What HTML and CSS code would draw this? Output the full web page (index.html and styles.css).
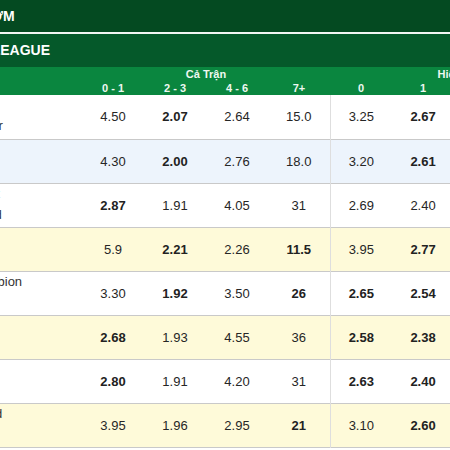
FILE: index.html
```html
<!DOCTYPE html>
<html lang="vi">
<head>
	<meta charset="UTF-8">
	<meta name="viewport" content="width=device-width, initial-scale=1.0">
	<title>Tỷ lệ kèo sớm</title>
	<link rel="stylesheet" href="styles.css">
</head>
<body>
	<div class="bang-keo">
		<div class="tieu-de">TỶ LỆ KÈO SỚM</div>
		<div class="giai-dau">PREMIER LEAGUE</div>
		<table class="bang">
			<colgroup>
				<col class="cot-doi">
				<col span="10" class="cot-keo">
			</colgroup>
			<thead>
				<tr class="nhom">
					<th rowspan="2"></th>
					<th colspan="4">Cả Trận</th>
					<th colspan="4">Hiệp 1</th>
					<th colspan="2"></th>
				</tr>
				<tr class="muc">
					<th>0 - 1</th>
					<th>2 - 3</th>
					<th>4 - 6</th>
					<th>7+</th>
					<th>0</th>
					<th>1</th>
					<th>2</th>
					<th>3+</th>
					<th></th>
					<th></th>
				</tr>
			</thead>
			<tbody>
				<tr>
					<td class="doi"><div>Chelsea</div><div>Tottenham Hotspur</div></td>
					<td>4.50</td><td class="dam">2.07</td><td>2.64</td><td>15.0</td>
					<td class="chia">3.25</td><td class="dam">2.67</td><td>5.10</td><td>11.0</td><td></td><td></td>
				</tr>
				<tr class="xanh">
					<td class="doi"><div>Everton</div><div>Fulham</div></td>
					<td>4.30</td><td class="dam">2.00</td><td>2.76</td><td>18.0</td>
					<td class="chia">3.20</td><td class="dam">2.61</td><td>5.30</td><td>12.0</td><td></td><td></td>
				</tr>
				<tr>
					<td class="doi"><div>Nottingham Forest</div><div>Sheffield Wednesd</div></td>
					<td class="dam">2.87</td><td>1.91</td><td>4.05</td><td>31</td>
					<td class="chia">2.69</td><td>2.40</td><td>4.30</td><td>8.5</td><td></td><td></td>
				</tr>
				<tr class="vang">
					<td class="doi"><div>Burnley</div><div>Leeds</div></td>
					<td>5.9</td><td class="dam">2.21</td><td>2.26</td><td class="dam">11.5</td>
					<td class="chia">3.95</td><td class="dam">2.77</td><td>4.10</td><td>6.6</td><td></td><td></td>
				</tr>
				<tr>
					<td class="doi"><div>West Bromwich Albion</div><div>Southampton</div></td>
					<td>3.30</td><td class="dam">1.92</td><td>3.50</td><td class="dam">26</td>
					<td class="chia dam">2.65</td><td class="dam">2.54</td><td>4.60</td><td>9.0</td><td></td><td></td>
				</tr>
				<tr class="vang">
					<td class="doi"><div>Arsenal</div><div>Aston Villa</div></td>
					<td class="dam">2.68</td><td>1.93</td><td>4.55</td><td>36</td>
					<td class="chia dam">2.58</td><td class="dam">2.38</td><td>4.40</td><td>8.0</td><td></td><td></td>
				</tr>
				<tr>
					<td class="doi"><div>Liverpool</div><div>Brighton</div></td>
					<td class="dam">2.80</td><td>1.91</td><td>4.20</td><td>31</td>
					<td class="chia dam">2.63</td><td class="dam">2.40</td><td>4.30</td><td>8.4</td><td></td><td></td>
				</tr>
				<tr class="vang">
					<td class="doi"><div>Manchester United</div><div>Newcastle</div></td>
					<td>3.95</td><td>1.96</td><td>2.95</td><td class="dam">21</td>
					<td class="chia">3.10</td><td class="dam">2.60</td><td>4.80</td><td>10.0</td><td></td><td></td>
				</tr>
			</tbody>
		</table>
	</div>
</body>
</html>
```

FILE: styles.css
```css
* {
	margin: 0;
	padding: 0;
	box-sizing: border-box;
	font-family: "Liberation Sans", Arial, sans-serif;
}
body {
	background-color: white;
	overflow: hidden;
}
.bang-keo {
	margin-left: -120px;
	width: 900px;
}
.tieu-de {
	height: 34px;
	line-height: 32px;
	padding-left: 24px;
	background-color: #044a21;
	border-bottom: 2px solid #f2f7f3;
	color: white;
	font-size: 14px;
	font-weight: bold;
}
.giai-dau {
	height: 33px;
	line-height: 33px;
	padding-left: 44px;
	background-color: #05592a;
	color: white;
	font-size: 14px;
	font-weight: bold;
}
.bang {
	border-collapse: collapse;
	table-layout: fixed;
	width: 822px;
}
.cot-doi {
	width: 202px;
}
.cot-keo {
	width: 62px;
}
.bang thead {
	background-color: #0a863f;
	color: #eef8f1;
	font-size: 11px;
	font-weight: bold;
}
.bang .nhom th {
	height: 14px;
	line-height: 14px;
	vertical-align: bottom;
}
.bang .muc th {
	height: 14px;
	line-height: 14px;
	vertical-align: top;
}
.bang tbody tr {
	height: 44px;
	border-bottom: 1px solid #c9c9c9;
}
.bang tbody tr.xanh {
	background-color: #edf4fc;
}
.bang tbody tr.vang {
	background-color: #fefad9;
}
.bang td {
	text-align: center;
	font-size: 13px;
	color: #262626;
}
.bang td.dam {
	font-weight: bold;
	color: #222;
}
.bang td.chia {
	border-left: 1px solid #dedede;
}
.bang td.doi {
	text-align: left;
	padding: 2px 0 0 13px;
	line-height: 16px;
	white-space: nowrap;
	vertical-align: top;
	font-weight: normal;
	color: #333;
}
.bang td.doi div + div {
	margin-top: 5px;
}
```
